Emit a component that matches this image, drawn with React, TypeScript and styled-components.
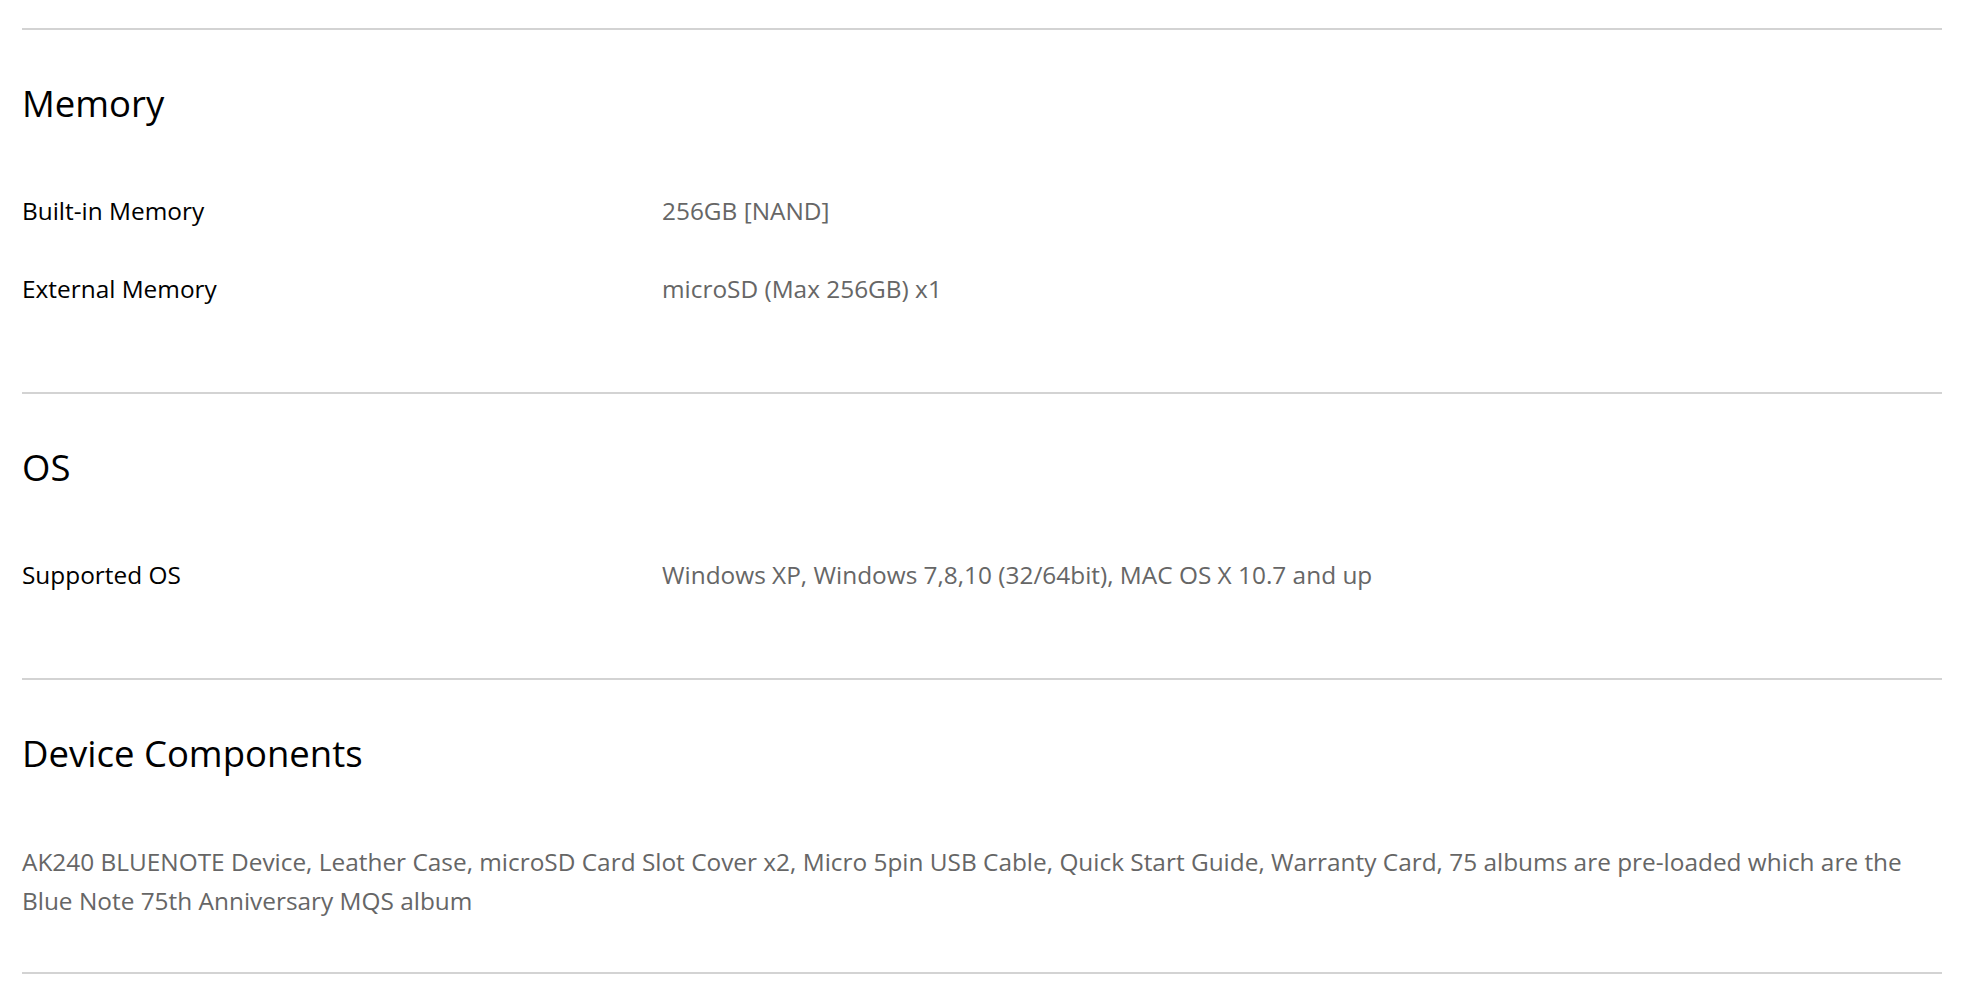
import React from "react";
import styled, { createGlobalStyle } from "styled-components";

const GlobalStyle = createGlobalStyle`
  html, body {
    margin: 0;
    padding: 0;
    background: #fff;
  }
  body {
    font-family: "Open Sans", "Noto Sans", sans-serif;
    color: #000;
  }
`;

const Page = styled.div`
  width: 1920px;
  padding: 28px 0 0 22px;
`;

const Section = styled.section<{ $bottom?: number; $last?: boolean }>`
  border-top: 2px solid #d3d3d3;
  padding: 49px 0 ${(p) => p.$bottom ?? 64}px;
  ${(p) => p.$last && "border-bottom: 2px solid #d3d3d3;"}
`;

const Heading = styled.h2`
  margin: 0 0 45px;
  font-size: 36.5px;
  font-weight: 400;
  line-height: 48px;
  color: #000;
`;

const Row = styled.div`
  display: grid;
  grid-template-columns: 640px 1fr;
  padding: 20px 0;
  font-size: 24.4px;
  line-height: 38px;
`;

const Label = styled.div`
  color: #000;
`;

const Value = styled.div`
  color: #666;
`;

const Paragraph = styled.p`
  margin: 0;
  padding: 20px 0;
  font-size: 24.4px;
  line-height: 39px;
  color: #666;
`;

type Spec = { label: string; value: string };

const memory: Spec[] = [
  { label: "Built-in Memory", value: "256GB [NAND]" },
  { label: "External Memory", value: "microSD (Max 256GB) x1" },
];

const os: Spec[] = [
  {
    label: "Supported OS",
    value: "Windows XP, Windows 7,8,10 (32/64bit), MAC OS X 10.7 and up",
  },
];

const SpecRows: React.FC<{ items: Spec[] }> = ({ items }) => (
  <>
    {items.map((s) => (
      <Row key={s.label}>
        <Label>{s.label}</Label>
        <Value>{s.value}</Value>
      </Row>
    ))}
  </>
);

const App: React.FC = () => {
  return (
    <Page>
      <GlobalStyle />
      <Section>
        <Heading>Memory</Heading>
        <SpecRows items={memory} />
      </Section>
      <Section>
        <Heading>OS</Heading>
        <SpecRows items={os} />
      </Section>
      <Section $bottom={32} $last>
        <Heading>Device Components</Heading>
        <Paragraph>
          AK240 BLUENOTE Device, Leather Case, microSD Card Slot Cover x2,
          Micro 5pin USB Cable, Quick Start Guide, Warranty Card, 75 albums are
          pre-loaded which are the Blue Note 75th Anniversary MQS album
        </Paragraph>
      </Section>
    </Page>
  );
};

export default App;
